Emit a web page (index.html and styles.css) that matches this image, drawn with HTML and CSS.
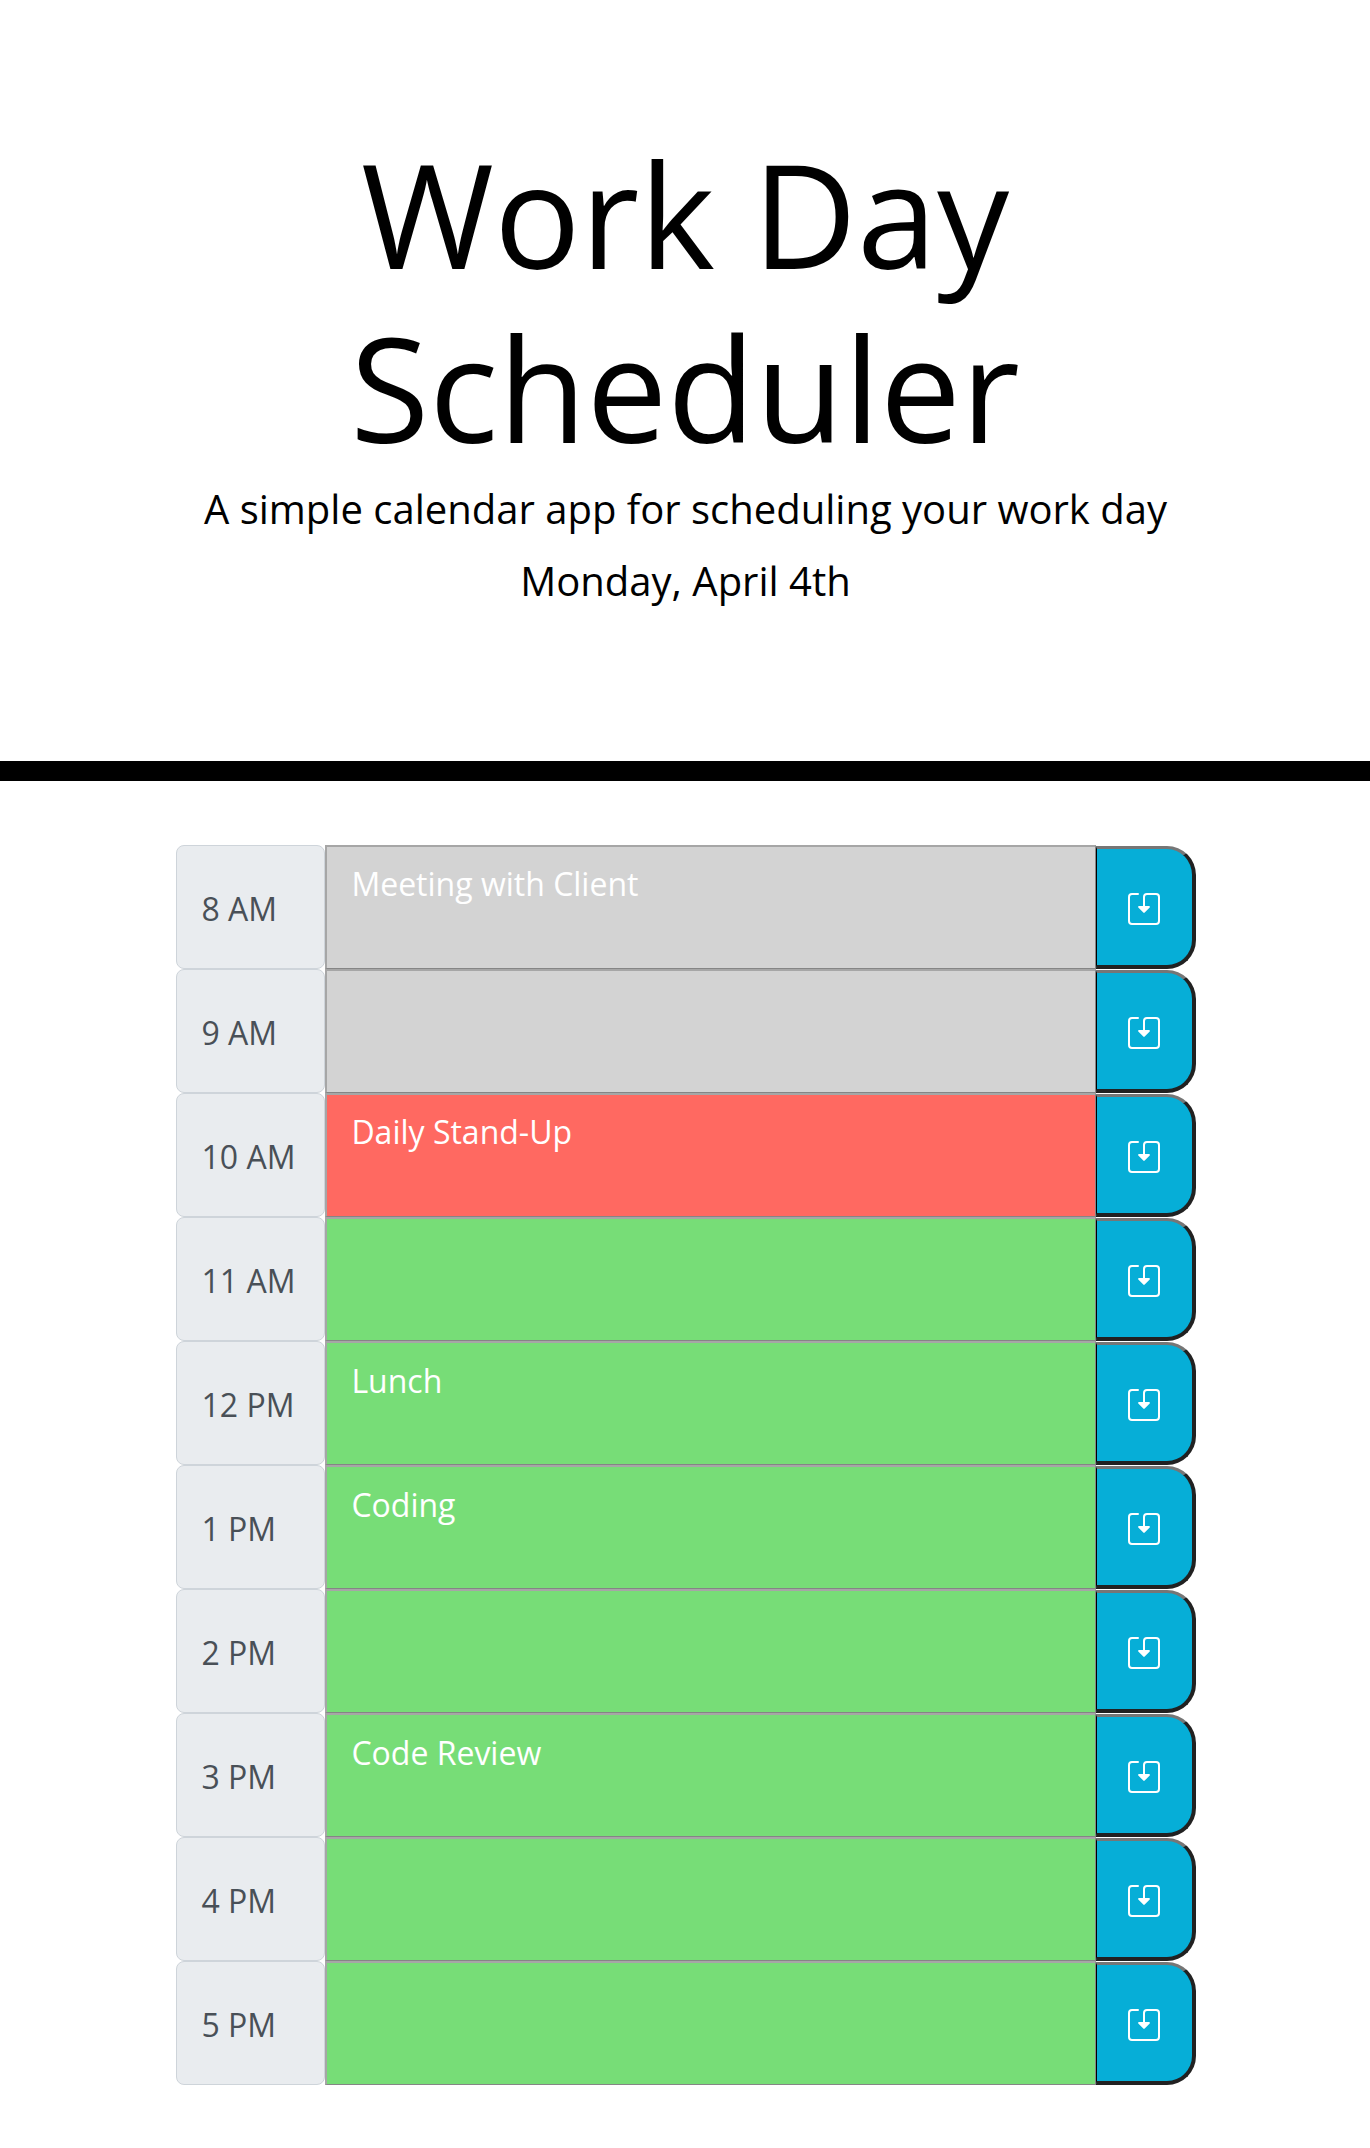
FILE: index.html
```html
<!DOCTYPE html>
<html lang="en">
<head>
<meta charset="utf-8">
<title>Work Day Scheduler</title>
<link rel="stylesheet" href="styles.css">
</head>
<body>
<header class="jumbotron">
  <h1 class="title">Work Day Scheduler</h1>
  <p class="lead">A simple calendar app for scheduling your work day</p>
  <p class="lead">Monday, April 4th</p>
</header>
<main class="schedule" id="schedule"></main>
<script src="script.js"></script>
</body>
</html>
```
FILE: styles.css
```css
* { box-sizing: border-box; }
body {
  margin: 0;
  background: #fff;
  color: #000;
  font-family: "Open Sans", sans-serif;
}
.jumbotron {
  height: 781px;
  padding: 126px 170px 0;
  border-bottom: 20px solid #000;
  text-align: center;
}
.title {
  width: 760px;
  margin: 0 auto 4px;
  font-size: 144px;
  font-weight: 400;
  line-height: 174px;
}
.lead {
  margin: 0 0 11px;
  padding-left: 1px;
  font-size: 40px;
  line-height: 61px;
}
.schedule {
  width: 1020px;
  margin: 64px 0 0 176px;
}
.row {
  display: flex;
  height: 124.06px;
}
.hour {
  display: flex;
  align-items: center;
  width: 149px;
  padding: 2px 0 0 24.5px;
  border: 1px solid #ced4da;
  border-radius: 8px;
  background: #e9ecef;
  color: #495057;
  font-size: 32px;
}
.task {
  width: 771px;
  padding: 13.4px 24.4px 12px;
  border: 1px solid #858585;
  border-top: 2px solid #a6a6a6;
  border-left: 2px solid #a6a6a6;
  background: #d3d3d3;
  color: #fff;
  font: 32px/48px "Open Sans", sans-serif;
  resize: none;
  overflow: hidden;
}
.present { background: #ff6961; }
.future { background: #77dd77; }
.save {
  display: flex;
  align-items: center;
  justify-content: center;
  width: 100px;
  margin-top: 1px;
  padding: 4px 1px 0 0;
  border: solid #212121;
  border-width: 3px 4px 4px 1px;
  border-top-color: #767676;
  border-left-color: #000;
  border-radius: 0 29px 29px 0;
  background: #06aed7;
}
.icon { display: block; width: 32px; height: 32px; }
```
FILE: script.js
```js
const slots = [
  ["8 AM", "Meeting with Client", "past"],
  ["9 AM", "", "past"],
  ["10 AM", "Daily Stand-Up", "present"],
  ["11 AM", "", "future"],
  ["12 PM", "Lunch", "future"],
  ["1 PM", "Coding", "future"],
  ["2 PM", "", "future"],
  ["3 PM", "Code Review", "future"],
  ["4 PM", "", "future"],
  ["5 PM", "", "future"]
];

document.getElementById("schedule").innerHTML = slots.map(([hour, text, state]) => `
  <div class="row">
    <div class="hour">${hour}</div>
    <textarea class="task ${state}" spellcheck="false">${text}</textarea>
    <button class="save" aria-label="Save">
      <svg class="icon" viewBox="0 0 32 32">
        <path d="M10 1H4a3 3 0 0 0-3 3v24a3 3 0 0 0 3 3h24a3 3 0 0 0 3-3V4a3 3 0 0 0-3-3h-9a3 3 0 0 0-3 3v10" fill="none" stroke="#fff" stroke-width="2" stroke-linecap="round"/>
        <path d="M11 13h10a.9.9 0 0 1 .7 1.5l-5 5.1a1 1 0 0 1-1.4 0l-5-5.1A.9.9 0 0 1 11 13z" fill="#fff"/>
      </svg>
    </button>
  </div>`).join("");
```
